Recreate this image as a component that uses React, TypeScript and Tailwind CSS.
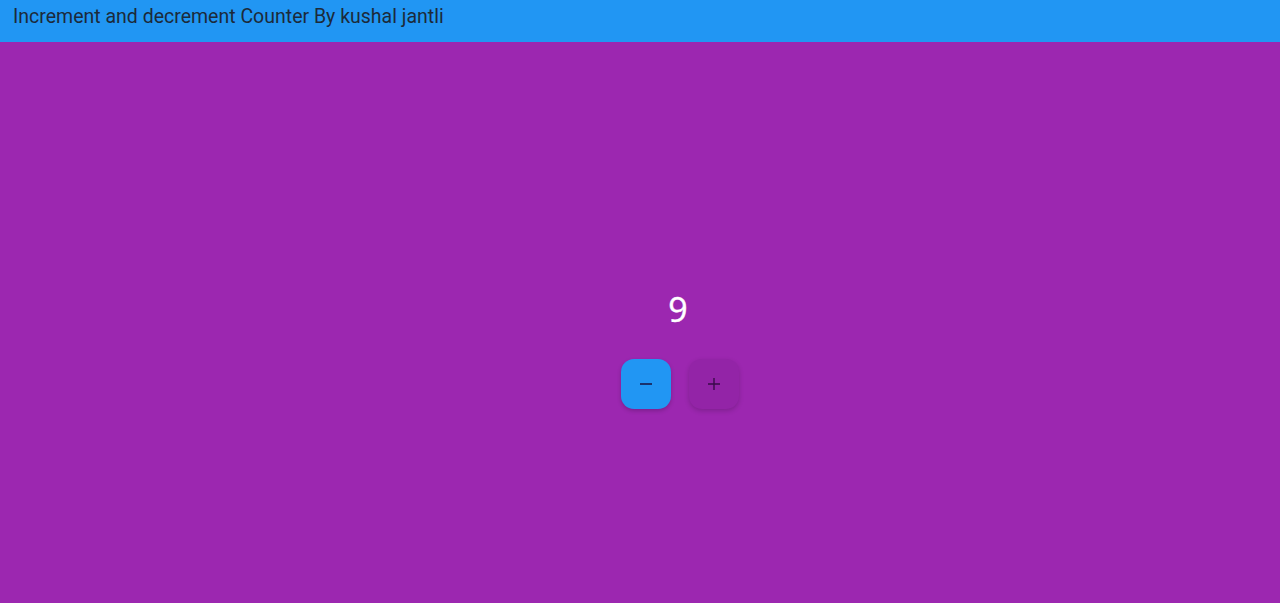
import { useState } from 'react';

export default function App() {
  const [count, setCount] = useState(9);

  return (
    <div className="h-[603px] w-full flex flex-col bg-[#9c27b0] font-['Roboto',sans-serif]">
      {/* App bar */}
      <header className="h-[42px] shrink-0 bg-[#2196f3] flex items-start pt-[4px] px-[13px]">
        <h1 className="text-[19.5px] leading-[26px] text-[#1c2a3a]">Increment and decrement Counter By kushal jantli</h1>
      </header>

      {/* Counter */}
      <main className="flex-1 flex flex-col items-center justify-center pt-[52px] pl-[80px]">
        <div className="mr-[4px] text-[34px] leading-[40px] text-white font-['Open_Sans',sans-serif] [-webkit-text-stroke:0.4px_white]">{count}</div>
        <div className="mt-[30px] flex gap-[18px]">
          <button
            onClick={() => setCount((c) => c - 1)}
            className="w-[50px] h-[50px] rounded-[13px] bg-[#2196f3] flex items-center justify-center shadow-[0_2px_4px_rgba(0,0,0,0.2)]"
          >
            <svg width="14" height="14" viewBox="0 0 14 14">
              <path d="M1 7h12" stroke="#1a1a4a" strokeWidth="1.6" />
            </svg>
          </button>
          <button
            onClick={() => setCount((c) => c + 1)}
            className="w-[50px] h-[50px] rounded-[13px] bg-[#9324a7] flex items-center justify-center shadow-[0_2px_5px_rgba(0,0,0,0.18)]"
          >
            <svg width="14" height="14" viewBox="0 0 14 14">
              <path d="M1 7h12M7 1v12" stroke="#3a0a4a" strokeWidth="1.4" />
            </svg>
          </button>
        </div>
      </main>
    </div>
  );
}
